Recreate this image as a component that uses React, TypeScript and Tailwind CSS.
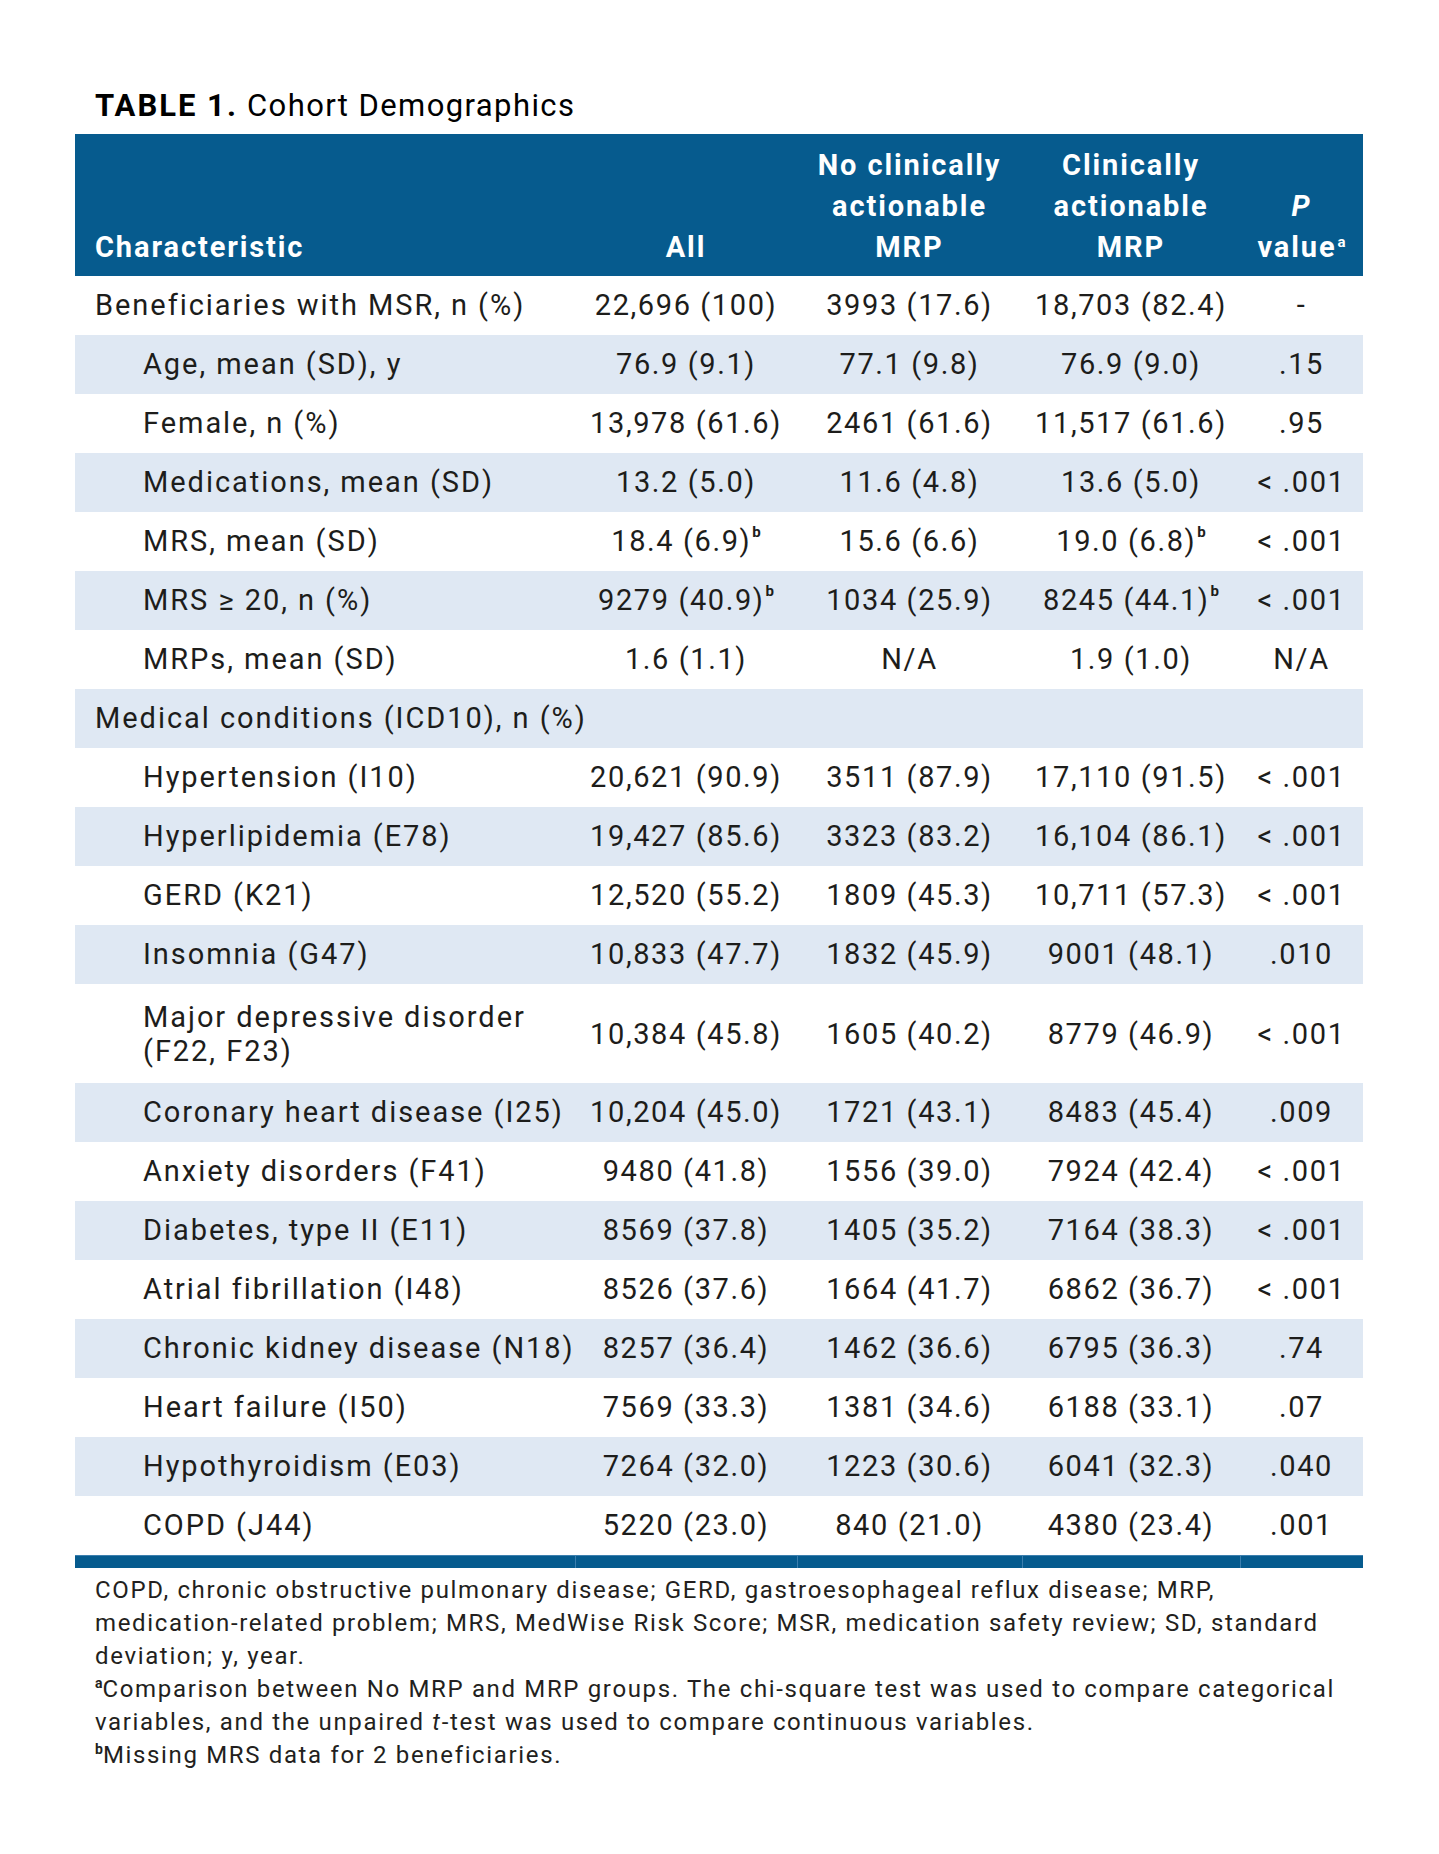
type Row = {
  label: string;
  label2?: string;
  indent?: boolean;
  all?: string;
  allSup?: string;
  no?: string;
  yes?: string;
  yesSup?: string;
  p?: string;
  tall?: boolean;
};

const rows: Row[] = [
  { label: "Beneficiaries with MSR, n (%)", all: "22,696 (100)", no: "3993 (17.6)", yes: "18,703 (82.4)", p: "-" },
  { label: "Age, mean (SD), y", indent: true, all: "76.9 (9.1)", no: "77.1 (9.8)", yes: "76.9 (9.0)", p: ".15" },
  { label: "Female, n (%)", indent: true, all: "13,978 (61.6)", no: "2461 (61.6)", yes: "11,517 (61.6)", p: ".95" },
  { label: "Medications, mean (SD)", indent: true, all: "13.2 (5.0)", no: "11.6 (4.8)", yes: "13.6 (5.0)", p: "< .001" },
  { label: "MRS, mean (SD)", indent: true, all: "18.4 (6.9)", allSup: "b", no: "15.6 (6.6)", yes: "19.0 (6.8)", yesSup: "b", p: "< .001" },
  { label: "MRS ≥ 20, n (%)", indent: true, all: "9279 (40.9)", allSup: "b", no: "1034 (25.9)", yes: "8245 (44.1)", yesSup: "b", p: "< .001" },
  { label: "MRPs, mean (SD)", indent: true, all: "1.6 (1.1)", no: "N/A", yes: "1.9 (1.0)", p: "N/A" },
  { label: "Medical conditions (ICD10), n (%)" },
  { label: "Hypertension (I10)", indent: true, all: "20,621 (90.9)", no: "3511 (87.9)", yes: "17,110 (91.5)", p: "< .001" },
  { label: "Hyperlipidemia (E78)", indent: true, all: "19,427 (85.6)", no: "3323 (83.2)", yes: "16,104 (86.1)", p: "< .001" },
  { label: "GERD (K21)", indent: true, all: "12,520 (55.2)", no: "1809 (45.3)", yes: "10,711 (57.3)", p: "< .001" },
  { label: "Insomnia (G47)", indent: true, all: "10,833 (47.7)", no: "1832 (45.9)", yes: "9001 (48.1)", p: ".010" },
  { label: "Major depressive disorder", label2: "(F22, F23)", indent: true, tall: true, all: "10,384 (45.8)", no: "1605 (40.2)", yes: "8779 (46.9)", p: "< .001" },
  { label: "Coronary heart disease (I25)", indent: true, all: "10,204 (45.0)", no: "1721 (43.1)", yes: "8483 (45.4)", p: ".009" },
  { label: "Anxiety disorders (F41)", indent: true, all: "9480 (41.8)", no: "1556 (39.0)", yes: "7924 (42.4)", p: "< .001" },
  { label: "Diabetes, type II (E11)", indent: true, all: "8569 (37.8)", no: "1405 (35.2)", yes: "7164 (38.3)", p: "< .001" },
  { label: "Atrial fibrillation (I48)", indent: true, all: "8526 (37.6)", no: "1664 (41.7)", yes: "6862 (36.7)", p: "< .001" },
  { label: "Chronic kidney disease (N18)", indent: true, all: "8257 (36.4)", no: "1462 (36.6)", yes: "6795 (36.3)", p: ".74" },
  { label: "Heart failure (I50)", indent: true, all: "7569 (33.3)", no: "1381 (34.6)", yes: "6188 (33.1)", p: ".07" },
  { label: "Hypothyroidism (E03)", indent: true, all: "7264 (32.0)", no: "1223 (30.6)", yes: "6041 (32.3)", p: ".040" },
  { label: "COPD (J44)", indent: true, all: "5220 (23.0)", no: "840 (21.0)", yes: "4380 (23.4)", p: ".001" },
];

const grid = "grid grid-cols-[500px_222px_225px_218px_123px]";

function Sup({ c }: { c?: string }) {
  if (!c) return null;
  return <sup className="text-[15px] font-bold -top-[10px] ml-[1px] tracking-normal">{c}</sup>;
}

export default function App() {
  return (
    <div className="w-[1439px] min-h-[1854px] bg-white text-[#1d1d1b] font-['Roboto',sans-serif] pt-[88px] pl-[75px]">
      {/* title */}
      <div className="pl-[20px] text-[31px] leading-[36px] tracking-[1.4px] text-black mb-[10px]">
        <span className="font-bold tracking-[2px]">TABLE 1.</span> Cohort Demographics
      </div>

      <div className="w-[1288px]">
        {/* header */}
        <div className={`${grid} bg-[#065b8e] text-white font-bold text-[29px] leading-[41px] tracking-[1.9px] h-[142px]`}>
          <div className="flex items-end pl-[20px] pb-[8px]">Characteristic</div>
          <div className="flex items-end justify-center pb-[8px]">All</div>
          <div className="flex items-end justify-center pb-[8px] text-center">
            No clinically
            <br />
            actionable
            <br />
            MRP
          </div>
          <div className="flex items-end justify-center pb-[8px] text-center">
            Clinically
            <br />
            actionable
            <br />
            MRP
          </div>
          <div className="flex items-end justify-center pb-[8px] text-center">
            <div>
              <i>P</i>
              <br />
              value<Sup c="a" />
            </div>
          </div>
        </div>

        {/* body */}
        {rows.map((r, i) => (
          <div
            key={i}
            className={`${grid} text-[29px] tracking-[1.6px] ${r.tall ? "h-[99px] leading-[34px]" : "h-[59px]"} ${i % 2 === 1 ? "bg-[#dfe8f3]" : "bg-white"}`}
          >
            <div className={`flex items-center tracking-[1.95px] ${r.indent ? "pl-[68px]" : "pl-[20px]"}`}>
              <div className="whitespace-nowrap">
                {r.label}
                {r.label2 && (
                  <>
                    <br />
                    {r.label2}
                  </>
                )}
              </div>
            </div>
            <div className="flex items-center justify-center whitespace-nowrap">
              {r.all}
              <Sup c={r.allSup} />
            </div>
            <div className="flex items-center justify-center whitespace-nowrap">{r.no}</div>
            <div className="flex items-center justify-center whitespace-nowrap">
              {r.yes}
              <Sup c={r.yesSup} />
            </div>
            <div className="flex items-center justify-center whitespace-nowrap">{r.p}</div>
          </div>
        ))}

        {/* bottom rule */}
        <div className={`${grid} h-[13px] bg-[#065b8e] border-t border-[#3c7fae]`}>
          <div />
          <div className="border-l border-[#3c7fae]" />
          <div className="border-l border-[#3c7fae]" />
          <div className="border-l border-[#3c7fae]" />
          <div className="border-l border-[#3c7fae]" />
        </div>

        {/* footnotes */}
        <div className="pl-[20px] pt-[6px] text-[24px] leading-[33px] tracking-[1.65px] text-[#231f20] whitespace-nowrap">
          <div>COPD, chronic obstructive pulmonary disease; GERD, gastroesophageal reflux disease; MRP,</div>
          <div>medication-related problem; MRS, MedWise Risk Score; MSR, medication safety review; SD, standard</div>
          <div>deviation; y, year.</div>
          <div>
            <sup className="text-[14px] font-bold -top-[9px] tracking-normal">a</sup>Comparison between No MRP and MRP groups. The chi-square test was used to compare categorical
          </div>
          <div>
            variables, and the unpaired <i>t</i>-test was used to compare continuous variables.
          </div>
          <div>
            <sup className="text-[14px] font-bold -top-[9px] tracking-normal">b</sup>Missing MRS data for 2 beneficiaries.
          </div>
        </div>
      </div>
    </div>
  );
}
